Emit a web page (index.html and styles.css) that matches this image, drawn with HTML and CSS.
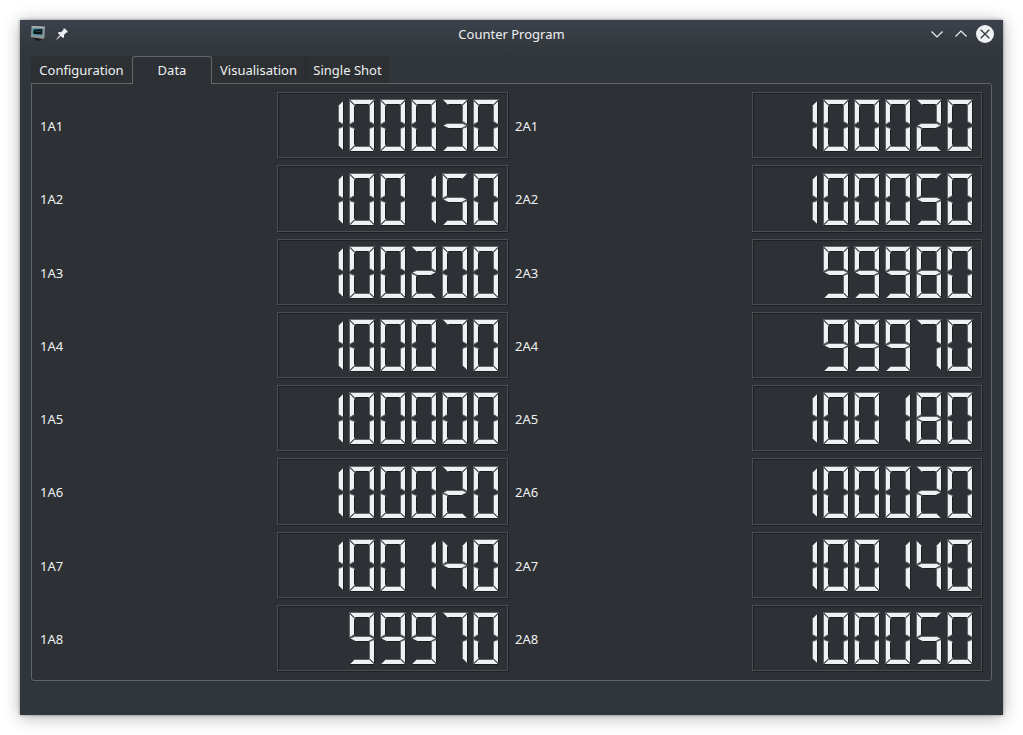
FILE: index.html
```html
<!DOCTYPE html>
<html lang="en">
<head>
<meta charset="utf-8">
<title>Counter Program</title>
<link rel="stylesheet" href="styles.css">
</head>
<body>
<main class="window">
  <header class="titlebar">
    <div class="title-left">
      <svg class="app-icon" width="16" height="16" viewBox="0 0 16 16">
        <path d="M4 13l7 0 1 2-4 .8-3-1z" fill="#17191b"/>
        <path d="M1.6 1l13.4.8-.5 11L12.6 14 .8 12z" fill="#8b9394"/>
        <path d="M1.6 1l13.4.8-.3 1.2L2 2.3z" fill="#b4babb"/>
        <path d="M2.6 3l10.2.5-.4 7.3-10-.7z" fill="#48a1b8"/>
        <path d="M3.6 4.4l8.8-.4-.2 5.4L3.2 9z" fill="#101416"/>
        <path d="M5 6.5l2-.5 1 .6 3-.5" stroke="#356b7a" stroke-width=".6" fill="none"/>
      </svg>
      <svg class="pin-icon" width="12" height="12" viewBox="0 0 12 12">
        <path d="M7.3.5h1.4L11.5 3.3v1.3l-1.2-.1-2.4 2.6.2 2.1-1 .9L4.8 7.9 1 11.4H.5V11L4 7.1 1.9 5l.9-1 2.2.2 2.5-2.4z" fill="#f4f5f6"/>
      </svg>
    </div>
    <h1 class="title">Counter Program</h1>
    <div class="controls">
      <svg width="18" height="18" viewBox="0 0 18 18"><path d="M3.5 6.5L9 12l5.5-5.5" class="arrow"/></svg>
      <svg width="18" height="18" viewBox="0 0 18 18"><path d="M3.5 11.5L9 6l5.5 5.5" class="arrow"/></svg>
      <svg width="18" height="18" viewBox="0 0 18 18"><circle cx="9" cy="9" r="9" fill="#eff0f1"/><path d="M4.7 4.7l8.6 8.6M13.3 4.7l-8.6 8.6" class="cross"/></svg>
    </div>
  </header>
  <nav class="tabs">
    <div class="tab tab-config">Configuration</div>
    <div class="tab tab-active">Data</div>
    <div class="tab tab-vis">Visualisation</div>
    <div class="tab tab-shot">Single Shot</div>
  </nav>
  <section class="pane" id="pane"></section>
</main>
<script src="app.js"></script>
</body>
</html>
```
FILE: styles.css
```css
* { box-sizing: border-box; }
body {
  margin: 0;
  padding: 20px;
  height: 735px;
  background: #fff;
  font: 13px/18px "Noto Sans", sans-serif;
  color: #eff0f1;
  overflow: hidden;
}
.window {
  width: 983px;
  height: 695px;
  display: flex;
  flex-direction: column;
  background: linear-gradient(#3c424c 0, #343a3f 22px, #31363a 34px);
  box-shadow: 0 0 3px rgba(0,0,0,.4), 0 2px 16px rgba(0,0,0,.3);
}
.titlebar {
  height: 36px;
  display: grid;
  grid-template-columns: 1fr auto 1fr;
  align-items: start;
  padding: 5px 9px 0 9px;
}
.title-left { display: flex; gap: 10px; padding-left: 1px; }
.pin-icon { margin-top: 3px; }
.title { margin: 0; font-size: 13px; font-weight: 400; line-height: 18px; }
.controls { display: flex; justify-content: flex-end; gap: 6px; }
.arrow { fill: none; stroke: #eff0f1; stroke-width: 1.2; }
.cross { fill: none; stroke: #31363b; stroke-width: 1.3; }
.tabs { display: flex; height: 28px; padding-left: 11px; position: relative; z-index: 1; }
.tab {
  height: 27px;
  padding-top: 5px;
  text-align: center;
  background: #2c3033;
  white-space: nowrap;
}
.tab-config { width: 101px; border-radius: 3px 0 0; }
.tab-active {
  width: 80px;
  height: 28px;
  background: #2d3034;
  border: 1px solid #616568;
  border-bottom: 0;
  border-radius: 3px 3px 0 0;
  padding-top: 4px;
}
.tab-vis { width: 94px; border-right: 1px solid #27292c; }
.tab-shot { width: 84px; padding-right: 1px; border-radius: 0 3px 0 0; }
.pane {
  width: 961px;
  height: 598px;
  margin: -1px 0 0 11px;
  padding: 8px 8px 0 8px;
  background: #2d3034;
  border: 1px solid #616568;
  border-radius: 0 3px 3px 3px;
  display: grid;
  grid-template-columns: 237px 232px 6px 237px 231px;
  grid-template-rows: 73px 74px 73px 73px 73px 74px 73px 73px;
}
.label { line-height: 68px; }
.label-right { grid-column: 4; }
.lcd {
  height: 66px;
  margin-right: 1px;
  border: 1px solid #4b4f54;
  box-shadow: 1px 1px 0 #1e2023, inset 1px 1px 0 #1e2023;
  display: flex;
  justify-content: flex-end;
  align-items: flex-start;
  padding: 6px 7px 0 0;
}
.lcd-tall { height: 67px; padding-top: 7px; }
.digits { shape-rendering: geometricPrecision; }
.segment { fill: #eff0f1; stroke: none; }
.light { fill: none; stroke: #63676b; stroke-width: 1; }
.dark { fill: none; stroke: #1b1d1f; stroke-width: 1; }
```
FILE: app.js
```js
const left = ["100030", "100150", "100200", "100070", "100000", "100020", "100140", "99970"];
const right = ["100020", "100050", "99980", "99970", "100180", "100020", "100140", "100050"];

// Each segment is a closed outline, followed by its lit and shaded edges.
const segments = {
  a: ["0,0 25,0 20,5 5,5", "5,5 0,0 25,0 20,5", "19,5 6,5"],
  f: ["0,1 5,6 5,22 0,25", "5,22 0,25 0,1 5,6", "5,7 5,22"],
  b: ["25,1 25,25 20,22 20,6", "25,25 20,22 20,6 25,1", "25,1 25,25"],
  g: ["1,26 5,24 20,24 24,26 19,28.5 6,28.5", "2,25 5,24 20,24 23,25", "18,29 7,29"],
  e: ["0,27 5,29 5,46 0,51", "5,46 0,51 0,27 5,29", "5,30 5,45"],
  c: ["25,27 25,51 20,46 20,29", "25,51 20,46 20,29 25,27", "25,27 25,51"],
  d: ["0,52 5,47 20,47 25,52", "0,52 5,47 20,47 25,52", "25,52 0,52"]
};
const shapes = {
  0: "abcdef", 1: "bc", 2: "abedg", 3: "abcdg", 4: "fbcg",
  5: "afcdg", 6: "afecdg", 7: "abc", 8: "abcdefg", 9: "abfcdg"
};

function drawNumber(value) {
  const start = 6 - value.length;
  const digits = [...value].map((digit, i) => {
    const x = (start + i) * 31 + 0.5;
    const parts = [...shapes[digit]].map(name => {
      const [fill, light, dark] = segments[name];
      return `<polygon class="segment" points="${fill}"/><polyline class="light" points="${light}"/><polyline class="dark" points="${dark}"/>`;
    });
    return `<g transform="translate(${x} .5)">${parts.join("")}</g>`;
  });
  return `<svg class="digits" width="182" height="54" role="img" aria-label="${value}">${digits.join("")}</svg>`;
}

document.getElementById("pane").innerHTML = left.map((value, i) => {
  const cls = "lcd" + (i === 1 || i === 5 ? " lcd-tall" : "");
  return `<div class="label">1A${i + 1}</div><div class="${cls}">${drawNumber(value)}</div>
    <div class="label label-right">2A${i + 1}</div><div class="${cls}">${drawNumber(right[i])}</div>`;
}).join("");
```
